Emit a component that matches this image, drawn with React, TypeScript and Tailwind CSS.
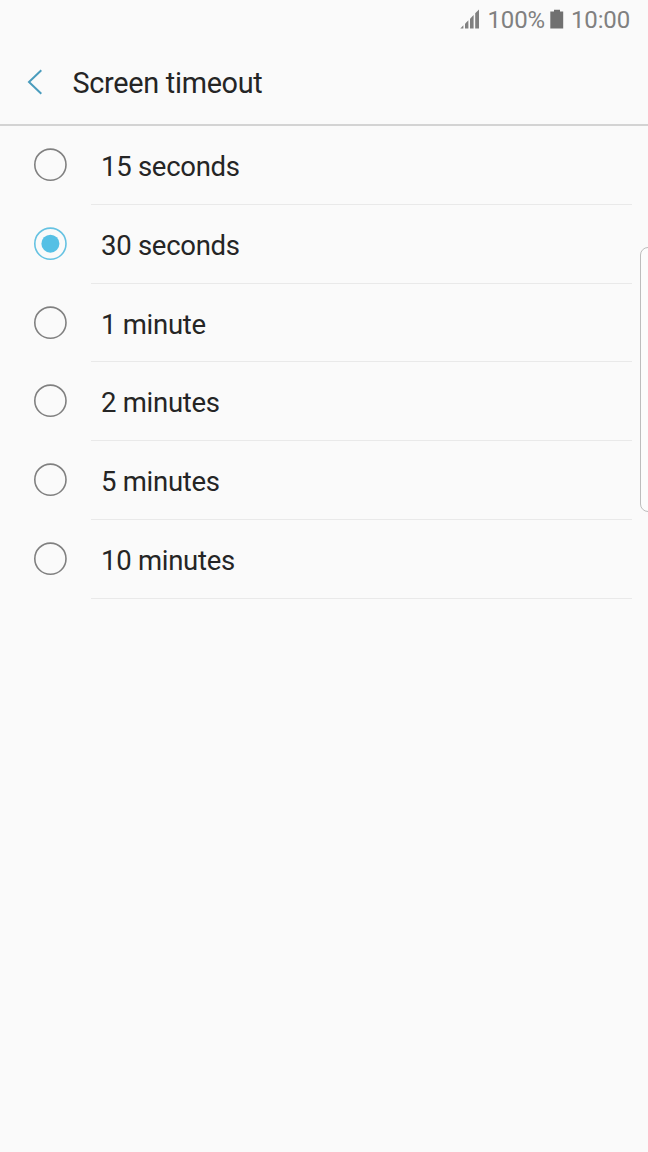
import { useState } from "react";

interface TimeoutOption {
  id: string;
  label: string;
}

const OPTIONS: TimeoutOption[] = [
  { id: "15s", label: "15 seconds" },
  { id: "30s", label: "30 seconds" },
  { id: "1m", label: "1 minute" },
  { id: "2m", label: "2 minutes" },
  { id: "5m", label: "5 minutes" },
  { id: "10m", label: "10 minutes" },
];

function SignalIcon() {
  return (
    <svg width="20" height="20" viewBox="0 0 20 20" fill="#808080" className="shrink-0">
      <path d="M0.3 19.4 L3.4 16.3 V19.4 Z" />
      <path d="M5 19.4 V14.7 L8.4 11.3 V19.4 Z" />
      <path d="M10 19.4 V9.7 L13.6 6.1 V19.4 Z" />
      <path d="M15.2 19.4 V4.2 L19 0.4 V19.4 Z" />
    </svg>
  );
}

function BatteryIcon() {
  return (
    <svg width="14" height="20" viewBox="0 0 14 20" fill="#707070" className="shrink-0">
      <path d="M4 0.7 H10 V2.4 H13.2 V19.4 H0.3 V2.4 H4 Z" />
    </svg>
  );
}

function StatusBar() {
  return (
    <div className="flex h-10 items-start justify-end pr-[18px] text-[24px] leading-10 tracking-[-0.15px] text-[#808080]">
      <div className="mt-[9px]">
        <SignalIcon />
      </div>
      <span className="ml-2">100%</span>
      <div className="ml-[5px] mt-[9px]">
        <BatteryIcon />
      </div>
      <span className="ml-[7px]">10:00</span>
    </div>
  );
}

function Header() {
  return (
    <header className="flex h-[86px] items-center border-b-2 border-[#d3d3d3] pl-[27px]">
      <button type="button" aria-label="Back" className="shrink-0">
        <svg width="16" height="26" viewBox="0 0 16 26" fill="none">
          <path d="M14.3 1.2 L2 13 L14.3 24.8" stroke="#4a9cbd" strokeWidth="2" />
        </svg>
      </button>
      <h1 className="ml-[29.5px] pt-0.5 text-[28.8px] leading-10 tracking-[-0.28px] text-[#252525]">
        Screen timeout
      </h1>
    </header>
  );
}

interface OptionRowProps {
  option: TimeoutOption;
  checked: boolean;
  onSelect: (id: string) => void;
}

function OptionRow({ option, checked, onSelect }: OptionRowProps) {
  return (
    <button
      type="button"
      role="radio"
      aria-checked={checked}
      onClick={() => onSelect(option.id)}
      className="flex h-[78.75px] w-full text-left"
    >
      <svg width="34" height="34" viewBox="0 0 34 34" fill="none" className="ml-[33px] mt-[22px] shrink-0">
        <circle cx="17.4" cy="16.7" r="15.6" stroke={checked ? "#65c2e2" : "#808080"} strokeWidth="1.6" />
        {checked && <circle cx="17.4" cy="16.7" r="9" fill="#56c0e5" />}
      </svg>
      <span className="ml-6 mr-4 flex-1 border-b-[1.5px] border-[#e9e9e9] pl-2.5 text-[27.5px] leading-[81px] tracking-[-0.27px] text-[#252525]">
        {option.label}
      </span>
    </button>
  );
}

export default function App() {
  const [selected, setSelected] = useState("30s");

  return (
    <div className="relative h-[1152px] w-[648px] overflow-hidden bg-[#fafafa] font-[Roboto,sans-serif]">
      <StatusBar />
      <Header />
      <div role="radiogroup" aria-label="Screen timeout">
        {OPTIONS.map((option) => (
          <OptionRow
            key={option.id}
            option={option}
            checked={option.id === selected}
            onSelect={setSelected}
          />
        ))}
      </div>
      {/* edge panel handle, runs off the right side */}
      <div className="absolute -right-2 top-[247px] h-[265px] w-4 rounded-lg border border-[#bdbdbd] bg-[#fcfcfc]" />
    </div>
  );
}
